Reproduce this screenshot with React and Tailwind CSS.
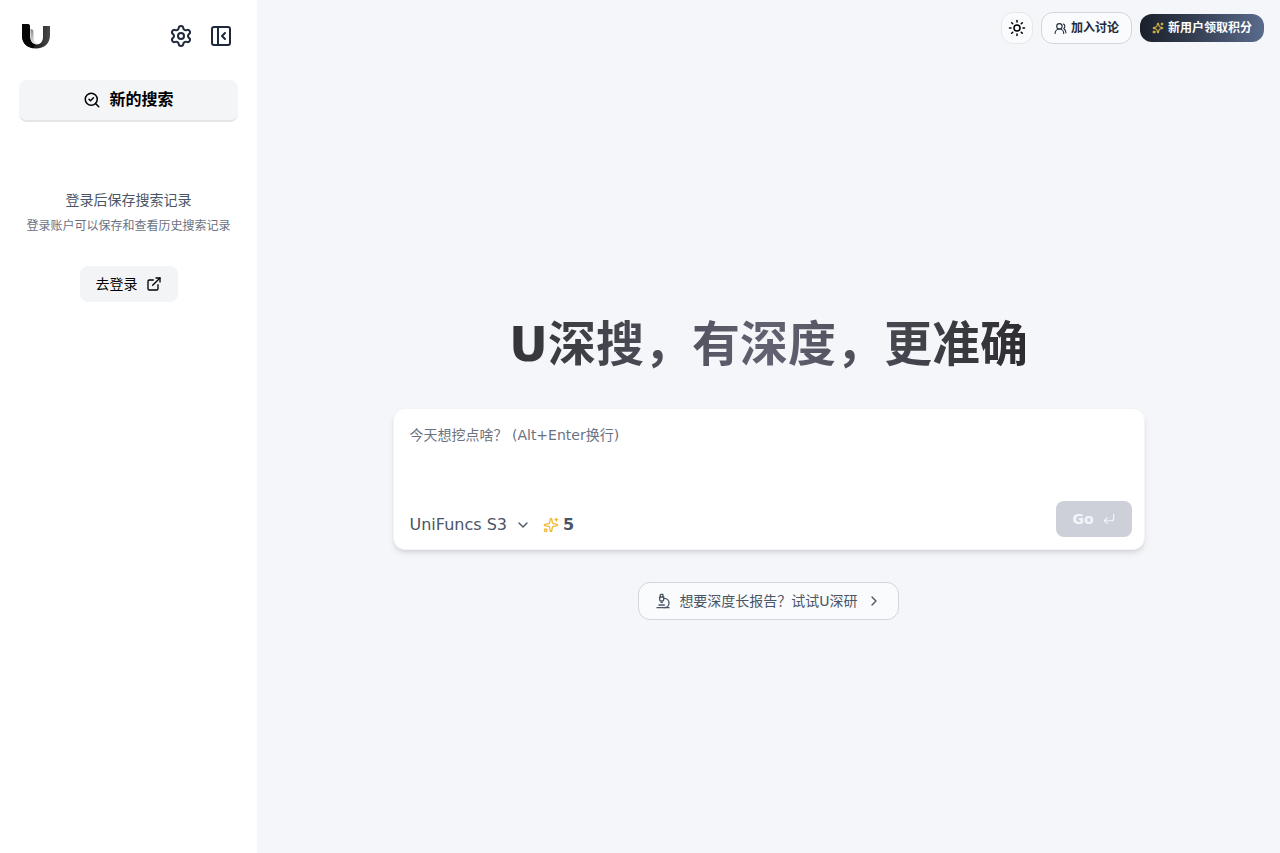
import React, { useState } from "react";
import {
  ChevronDown,
  ChevronRight,
  CornerDownLeft,
  ExternalLink,
  Microscope,
  PanelLeftClose,
  SearchCheck,
  Settings,
  Sparkles,
  Sun,
  UsersRound,
} from "lucide-react";

const Logo = () => (
  <svg viewBox="0 0 30 28" className="h-7 w-[30px]" aria-hidden="true">
    <defs>
      <linearGradient id="logoRight" x1="0" y1="0" x2="1" y2="0">
        <stop offset="0.3" stopColor="#111111" />
        <stop offset="1" stopColor="#4a4a4a" />
      </linearGradient>
      <linearGradient id="logoFold" x1="0" y1="0" x2="0" y2="1">
        <stop offset="0" stopColor="#888888" />
        <stop offset="1" stopColor="#e8e8e8" />
      </linearGradient>
    </defs>
    <path
      d="M22 4h7v9c0 8.500-5.500 13.500-14 13.500S1 21.500 1 13.500V2h5.500C8 2 9 3 9 4.500V14c0 5.500 2.500 8.500 6.500 8.500s6.500-3 6.500-7.500z"
      fill="url(#logoRight)"
    />
    <path
      d="M1 2h5.500C8 2 9 3 9 4.500V14c0 4.500 2 7.500 5.500 8L12 26.200C5 25 1 20.500 1 13.500z"
      fill="#060606"
    />
    <path
      d="M9.500 7c2 0 3 1 3 3v6c0 3 1.500 5 4.500 5.800C12.500 23 9.500 19.500 9.500 15z"
      fill="url(#logoFold)"
    />
  </svg>
);

const Sidebar = () => {
  return (
    <aside className="flex w-[257px] shrink-0 flex-col bg-white px-[19px]">
      <div className="flex h-18 items-center justify-between px-[2px]">
        <a href="#" aria-label="UniFuncs">
          <Logo />
        </a>
        <div className="flex items-center gap-4 pr-[3px] text-gray-800">
          <button type="button" aria-label="设置">
            <Settings size={24} />
          </button>
          <button type="button" aria-label="收起侧栏">
            <PanelLeftClose size={24} />
          </button>
        </div>
      </div>
      <button
        type="button"
        className="mt-2 flex h-[42px] items-center justify-center gap-2 rounded-lg border-b-2 border-[#e4e5e7] bg-[#f4f5f7] font-bold text-black"
      >
        <SearchCheck size={18} />
        新的搜索
      </button>
      <div className="mt-[68px] flex flex-col items-center">
        <p className="text-sm text-gray-600">登录后保存搜索记录</p>
        <p className="mt-2 text-xs whitespace-nowrap text-gray-500">
          登录账户可以保存和查看历史搜索记录
        </p>
        <a
          href="#"
          className="mt-8 flex h-9 items-center gap-2 rounded-lg bg-gray-100 px-4 text-sm text-black"
        >
          去登录
          <ExternalLink size={16} />
        </a>
      </div>
    </aside>
  );
};

const TopBar = () => {
  return (
    <header className="flex items-center justify-end gap-2 px-4 pt-3">
      <button
        type="button"
        aria-label="切换主题"
        className="flex size-8 items-center justify-center rounded-xl border border-gray-200 bg-[#fafbfc] text-black"
      >
        <Sun size={18} />
      </button>
      <a
        href="#"
        className="flex h-8 items-center gap-1 rounded-xl border border-gray-300 bg-[#fafbfc] px-3 text-xs font-bold text-gray-800"
      >
        <UsersRound size={13} />
        加入讨论
      </a>
      <button
        type="button"
        className="flex h-7 items-center gap-1 rounded-xl bg-linear-to-r from-[#1a202b] to-[#5a6b8c] px-3 text-xs font-bold text-white"
      >
        <Sparkles size={12} className="text-[#f7cf4a]" />
        新用户领取积分
      </button>
    </header>
  );
};

const SearchBox = () => {
  const [query, setQuery] = useState("");
  return (
    <form className="w-full rounded-xl border border-gray-100 bg-white shadow-md">
      <textarea
        aria-label="搜索内容"
        value={query}
        onChange={(e) => setQuery(e.target.value)}
        placeholder="今天想挖点啥？ (Alt+Enter换行)"
        className="block h-[92px] w-full resize-none px-4 pt-4 text-sm outline-none placeholder:text-gray-500"
      />
      <div className="flex h-12 items-start justify-between pr-3 pl-4">
        <div className="flex h-12 items-center text-gray-600">
          <button type="button" className="flex items-center gap-2">
            UniFuncs S3
            <ChevronDown size={16} />
          </button>
          <span className="ml-3 flex items-center gap-1 font-bold">
            <Sparkles size={16} className="text-[#f0b93a]" />5
          </span>
        </div>
        <button
          type="submit"
          disabled
          className="flex h-9 items-center gap-2 rounded-lg bg-[#cdd0d8] px-4 text-sm font-bold text-[#f4f5f8]"
        >
          Go
          <CornerDownLeft size={14} />
        </button>
      </div>
    </form>
  );
};

const App = () => {
  return (
    <div
      lang="zh-CN"
      className="flex min-h-screen bg-[#f4f6fa] font-['DejaVu_Sans','Noto_Sans_CJK_SC',sans-serif]"
    >
      <Sidebar />
      <div className="flex flex-1 flex-col">
        <TopBar />
        <main className="mx-auto flex w-full max-w-[752px] flex-1 flex-col items-center justify-center pt-8">
          <h1 className="bg-linear-to-r from-[#333338] via-[#626272] to-[#2c2c30] bg-clip-text text-5xl leading-[68px] font-bold text-transparent">
            U深搜，有深度，更准确
          </h1>
          <div className="mt-[30px] w-full">
            <SearchBox />
          </div>
          <a
            href="#"
            className="mt-8 flex h-[38px] items-center gap-2 rounded-xl border border-gray-300 bg-[#fafbfc] px-4 text-sm text-gray-600"
          >
            <Microscope size={16} />
            想要深度长报告？试试U深研
            <ChevronRight size={16} />
          </a>
        </main>
      </div>
    </div>
  );
};

export default App;
